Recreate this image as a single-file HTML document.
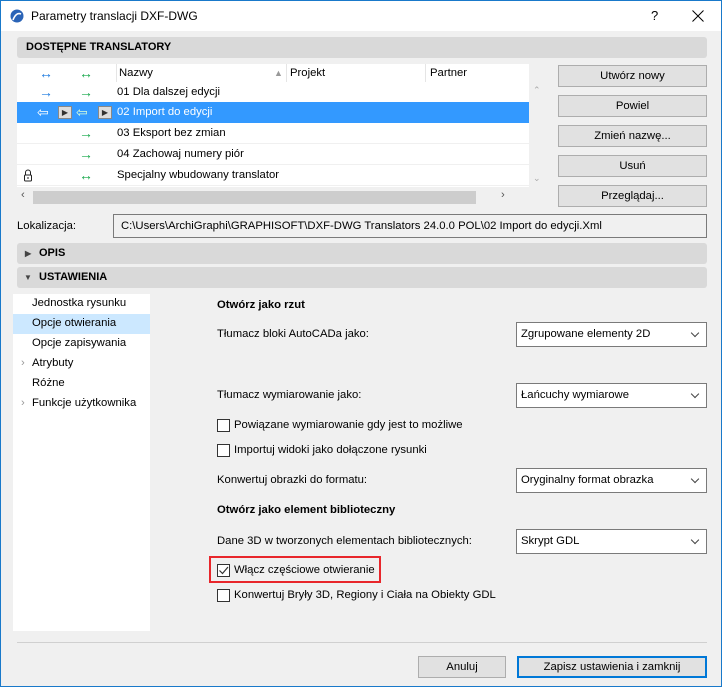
<!DOCTYPE html>
<html><head><meta charset="utf-8"><style>
*{box-sizing:border-box;margin:0;padding:0}
body{width:722px;height:687px;overflow:hidden;font-family:"Liberation Sans",sans-serif;font-size:11.3px;color:#000;position:relative;background:#f0f0f0}
.win{position:absolute;left:0;top:0;width:722px;height:687px;border:1px solid #1979ca;background:#f0f0f0}
.a{position:absolute;white-space:nowrap}
.bar{position:absolute;left:16px;width:690px;height:21px;background:#d9d9d9;border-radius:3px;font-weight:bold;font-size:11px;line-height:21px;padding-left:9px}
.btn{position:absolute;background:#e1e1e1;border:1px solid #adadad;text-align:center;line-height:20px}
.sel{position:absolute;left:515px;width:191px;height:25px;background:#fff;border:1px solid #7a7a7a;line-height:23px;padding-left:4px}
.sel:after{content:"";position:absolute;right:8px;top:7px;width:5px;height:5px;border-right:1px solid #444;border-bottom:1px solid #444;transform:rotate(45deg)}
.cb{position:absolute;left:216px;width:13px;height:13px;border:1px solid #333;background:#fff}
.row{position:absolute;left:16px;width:512px;height:21px;border-bottom:1px solid #f0f0f0;line-height:20px}
.bl{color:#1e7be0;font-size:14px}.gr{color:#16a84a;font-size:14px}
</style></head><body><div class="win">
<div class="a" style="left:0;top:0;width:720px;height:30px;background:#fff"></div>
<svg class="a" style="left:9px;top:8px" width="14" height="14"><circle cx="7" cy="7" r="6.5" fill="#2b64b7"/><path d="M3 11 Q6 3 11 5" stroke="#fff" stroke-width="1.6" fill="none"/></svg>
<div class="a" style="left:30px;top:8px;font-size:12px">Parametry translacji DXF-DWG</div>
<div class="a" style="left:650px;top:7px;font-size:13px">?</div>
<svg class="a" style="left:691px;top:9px" width="12" height="12"><path d="M0.5 0.5 L11.5 11.5 M11.5 0.5 L0.5 11.5" stroke="#000" stroke-width="1"/></svg>

<div class="bar" style="top:36px">DOSTĘPNE TRANSLATORY</div>
<div class="a" style="left:16px;top:63px;width:512px;height:123px;background:#fff"></div>
<div class="a" style="left:16px;top:63px;width:512px;height:18px;line-height:18px">
<span class="a bl" style="left:22px">↔</span><span class="a gr" style="left:62px">↔</span>
<span class="a" style="left:99px;top:0;border-left:1px solid #e5e5e5;height:18px"></span>
<span class="a" style="left:102px">Nazwy</span><span class="a" style="left:257px;color:#999;font-size:9px">▲</span>
<span class="a" style="left:269px;border-left:1px solid #e5e5e5;height:18px"></span><span class="a" style="left:273px">Projekt</span>
<span class="a" style="left:408px;border-left:1px solid #e5e5e5;height:18px"></span><span class="a" style="left:413px">Partner</span></div>
<div class="row" style="top:81px"><span class="a bl" style="left:22px">→</span><span class="a gr" style="left:62px">→</span><span class="a" style="left:100px">01 Dla dalszej edycji</span></div>
<div class="row" style="top:101px;background:#3399ff;color:#fff;border:none"><span class="a" style="left:20px;font-size:14px">⇦</span><span class="a" style="left:41px;top:4px;width:14px;height:13px;background:#ddd;border:1px solid #888;color:#333;font-size:8px;line-height:11px;text-align:center">▶</span><span class="a" style="left:59px;font-size:14px;color:#d9ffd9">⇦</span><span class="a" style="left:81px;top:4px;width:14px;height:13px;background:#ddd;border:1px solid #888;color:#333;font-size:8px;line-height:11px;text-align:center">▶</span><span class="a" style="left:100px">02 Import do edycji</span></div>
<div class="row" style="top:122px"><span class="a gr" style="left:62px">→</span><span class="a" style="left:100px">03 Eksport bez zmian</span></div>
<div class="row" style="top:143px"><span class="a gr" style="left:62px">→</span><span class="a" style="left:100px">04 Zachowaj numery piór</span></div>
<div class="row" style="top:164px"><svg class="a" style="left:6px;top:4px" width="10" height="13"><path d="M2.5 6 V3.5 A2.5 2.5 0 0 1 7.5 3.5 V6" stroke="#222" fill="none"/><rect x="1.5" y="6" width="7" height="6" rx="1" stroke="#222" fill="#fff"/><path d="M5 8 V10" stroke="#222"/></svg><span class="a gr" style="left:62px">↔</span><span class="a" style="left:100px">Specjalny wbudowany translator</span></div>
<div class="a" style="left:532px;top:84px;color:#aaa;font-size:9px">⌃</div>
<div class="a" style="left:532px;top:172px;color:#aaa;font-size:9px">⌄</div>
<div class="a" style="left:16px;top:187px;width:512px;height:18px;background:#f0f0f0"></div>
<div class="a" style="left:32px;top:190px;width:443px;height:13px;background:#cdcdcd"></div>
<div class="a" style="left:20px;top:188px;color:#555">‹</div><div class="a" style="left:500px;top:188px;color:#555">›</div>

<div class="btn" style="left:557px;top:64px;width:149px;height:22px">Utwórz nowy</div>
<div class="btn" style="left:557px;top:94px;width:149px;height:22px">Powiel</div>
<div class="btn" style="left:557px;top:124px;width:149px;height:22px">Zmień nazwę...</div>
<div class="btn" style="left:557px;top:154px;width:149px;height:22px">Usuń</div>
<div class="btn" style="left:557px;top:184px;width:149px;height:22px">Przeglądaj...</div>

<div class="a" style="left:16px;top:219px">Lokalizacja:</div>
<div class="a" style="left:112px;top:213px;width:594px;height:24px;border:1px solid #7a7a7a;background:#f0f0f0;line-height:22px;padding-left:7px">C:\Users\ArchiGraphi\GRAPHISOFT\DXF-DWG Translators 24.0.0 POL\02 Import do edycji.Xml</div>

<div class="bar" style="top:242px;padding-left:22px">OPIS<span class="a" style="left:8px;font-size:8px;color:#444">▶</span></div>
<div class="bar" style="top:266px;padding-left:22px">USTAWIENIA<span class="a" style="left:7px;font-size:8px;color:#444">▼</span></div>

<div class="a" style="left:12px;top:293px;width:137px;height:337px;background:#fff"></div>
<div class="a" style="left:12px;top:313px;width:137px;height:20px;background:#cce8ff"></div>
<div class="a" style="left:31px;top:296px">Jednostka rysunku</div>
<div class="a" style="left:31px;top:316px">Opcje otwierania</div>
<div class="a" style="left:31px;top:336px">Opcje zapisywania</div>
<div class="a" style="left:20px;top:356px;color:#999">›</div><div class="a" style="left:31px;top:356px">Atrybuty</div>
<div class="a" style="left:31px;top:376px">Różne</div>
<div class="a" style="left:20px;top:396px;color:#999">›</div><div class="a" style="left:31px;top:396px">Funkcje użytkownika</div>

<div class="a" style="left:216px;top:298px;font-weight:bold">Otwórz jako rzut</div>
<div class="a" style="left:216px;top:327px">Tłumacz bloki AutoCADa jako:</div>
<div class="sel" style="top:321px">Zgrupowane elementy 2D</div>
<div class="a" style="left:216px;top:388px">Tłumacz wymiarowanie jako:</div>
<div class="sel" style="top:382px">Łańcuchy wymiarowe</div>
<div class="cb" style="top:418px"></div><div class="a" style="left:233px;top:418px">Powiązane wymiarowanie gdy jest to możliwe</div>
<div class="cb" style="top:443px"></div><div class="a" style="left:233px;top:443px">Importuj widoki jako dołączone rysunki</div>
<div class="a" style="left:216px;top:473px">Konwertuj obrazki do formatu:</div>
<div class="sel" style="top:467px">Oryginalny format obrazka</div>
<div class="a" style="left:216px;top:503px;font-weight:bold">Otwórz jako element biblioteczny</div>
<div class="a" style="left:216px;top:534px">Dane 3D w tworzonych elementach bibliotecznych:</div>
<div class="sel" style="top:528px">Skrypt GDL</div>
<div class="a" style="left:208px;top:555px;width:172px;height:27px;border:2px solid #e8262b"></div>
<div class="cb" style="top:563px"><svg width="11" height="11" style="position:absolute;left:0;top:0"><path d="M1.5 5.5 L4.5 8.5 L10 2" stroke="#333" stroke-width="1.2" fill="none"/></svg></div>
<div class="a" style="left:233px;top:563px">Włącz częściowe otwieranie</div>
<div class="cb" style="top:588px"></div><div class="a" style="left:233px;top:588px">Konwertuj Bryły 3D, Regiony i Ciała na Obiekty GDL</div>

<div class="a" style="left:16px;top:641px;width:690px;height:1px;background:#d0d0d0"></div>
<div class="btn" style="left:417px;top:655px;width:88px;height:22px">Anuluj</div>
<div class="btn" style="left:516px;top:655px;width:190px;height:22px;border:2px solid #0078d7;line-height:18px">Zapisz ustawienia i zamknij</div>
</div></body></html>
